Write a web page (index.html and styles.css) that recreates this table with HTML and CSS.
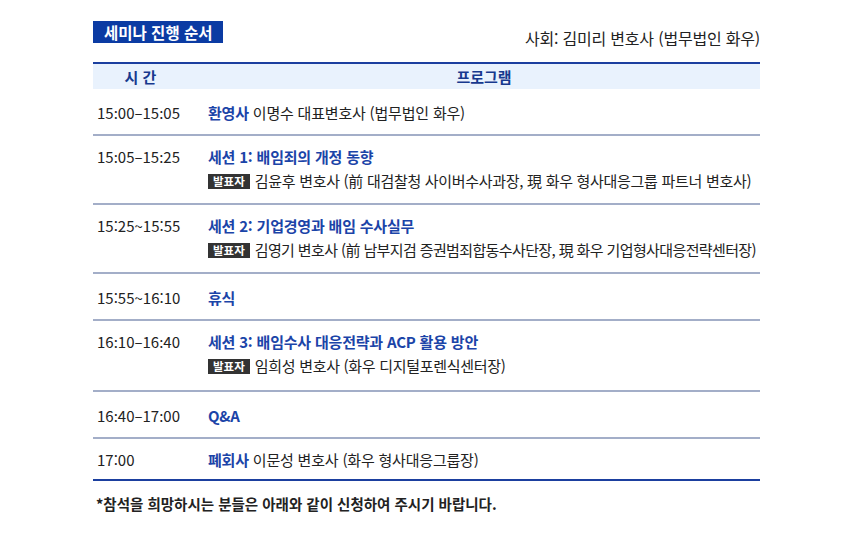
FILE: index.html
```html
<!DOCTYPE html>
<html lang="ko">
<head>
<meta charset="utf-8">
<link rel="stylesheet" href="styles.css">
</head>
<body>
<div class="wrap">
  <div class="top">
    <div class="title">세미나 진행 순서</div>
    <div class="host">사회: 김미리 변호사 (법무법인 화우)</div>
  </div>
  <table class="sched">
    <colgroup><col class="c-time"><col></colgroup>
    <thead>
      <tr><th class="h-time">시 간</th><th class="h-prog">프로그램</th></tr>
    </thead>
    <tbody>
      <tr><td class="time">15:00–15:05</td><td><span class="hl">환영사</span> 이명수 대표변호사 (법무법인 화우)</td></tr>
      <tr class="two"><td class="time">15:05–15:25</td><td><div class="hl">세션 1: 배임죄의 개정 동향</div><div class="spk"><span class="badge">발표자</span>김윤후 변호사 (前 대검찰청 사이버수사과장, 現 화우 형사대응그룹 파트너 변호사)</div></td></tr>
      <tr class="two"><td class="time">15:25~15:55</td><td><div class="hl">세션 2: 기업경영과 배임 수사실무</div><div class="spk tight"><span class="badge">발표자</span>김영기 변호사 (前 남부지검 증권범죄합동수사단장, 現 화우 기업형사대응전략센터장)</div></td></tr>
      <tr><td class="time">15:55~16:10</td><td><span class="hl">휴식</span></td></tr>
      <tr class="two tall"><td class="time">16:10–16:40</td><td><div class="hl">세션 3: 배임수사 대응전략과 ACP 활용 방안</div><div class="spk"><span class="badge">발표자</span>임희성 변호사 (화우 디지털포렌식센터장)</div></td></tr>
      <tr><td class="time">16:40–17:00</td><td><span class="hl">Q&amp;A</span></td></tr>
      <tr class="last"><td class="time">17:00</td><td><span class="hl">폐회사</span> 이문성 변호사 (화우 형사대응그룹장)</td></tr>
    </tbody>
  </table>
  <p class="note">*참석을 희망하시는 분들은 아래와 같이 신청하여 주시기 바랍니다.</p>
</div>
</body>
</html>
```
FILE: styles.css
```css
body {
  margin: 0;
  background: #fff;
  font-family: "Noto Sans CJK KR", "Noto Sans", sans-serif;
  color: #222;
}
.wrap {
  margin-left: 93px;
  width: 667px;
}
.top {
  display: flex;
  justify-content: space-between;
  align-items: flex-end;
  padding-top: 21px;
}
.title {
  background: #0b3ba3;
  color: #fff;
  font-weight: 700;
  font-size: 15.5px;
  line-height: 22px;
  height: 22px;
  padding: 0 10px 0 11px;
}
.host {
  font-size: 16px;
  line-height: 20px;
  letter-spacing: -0.2px;
  color: #222;
  margin-bottom: -5px;
}
.sched {
  margin-top: 19px;
  width: 100%;
  border-collapse: collapse;
  table-layout: fixed;
}
.c-time { width: 115px; }
.sched thead th {
  border-top: 2px solid #1b3f9f;
  background: #e9f2fd;
  color: #17398e;
  font-weight: 700;
  font-size: 15px;
  height: 25px;
  padding: 0;
  line-height: 25px;
}
.h-time { padding-right: 20px !important; }
.sched td {
  font-size: 15px;
  line-height: 22px;
  padding: 13px 0 10px 0;
  vertical-align: top;
  border-bottom: 2px solid #a3aec8;
  letter-spacing: -0.2px;
}
.sched td.time {
  padding-left: 4px;
  letter-spacing: 0;
}
.sched tr.two td { padding-top: 10px; padding-bottom: 11px; }
.sched tr.tall td { padding-bottom: 13px; }
.sched tr.last td {
  border-bottom: 2px solid #1b3f9f;
  padding-top: 10px;
  padding-bottom: 8px;
}
.hl {
  color: #1b44a8;
  font-weight: 700;
}
.spk {
  margin-top: 2px;
  height: 22px;
  display: flex;
  align-items: center;
  white-space: nowrap;
  letter-spacing: -0.3px;
}
.spk.tight {
  letter-spacing: -0.62px;
}
.badge {
  flex-shrink: 0;
  background: #333;
  color: #fff;
  font-size: 11.5px;
  font-weight: 700;
  line-height: 15px;
  padding: 0 5px;
  margin-right: 5px;
  letter-spacing: 0;
}
.note {
  margin: 12px 0 0 3px;
  font-size: 14.5px;
  font-weight: 700;
  line-height: 22px;
  color: #222;
}
```
